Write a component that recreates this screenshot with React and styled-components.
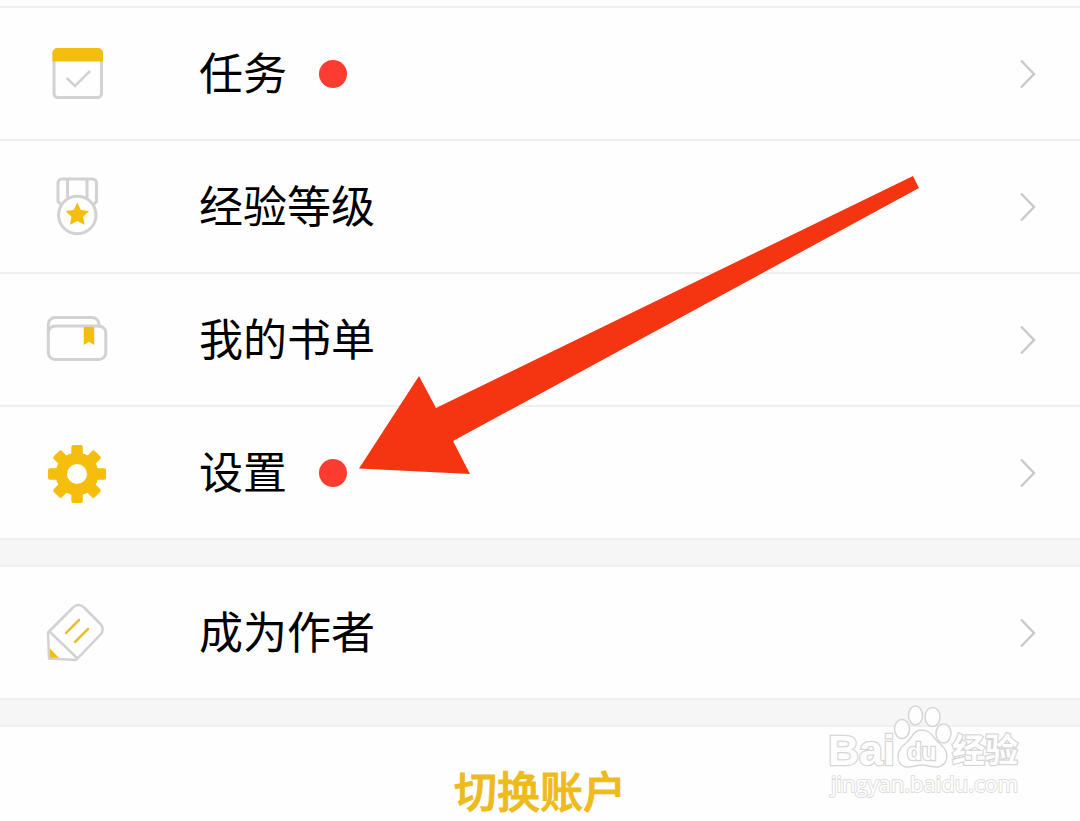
import React from 'react';
import styled, { createGlobalStyle } from 'styled-components';

const GlobalStyle = createGlobalStyle`
  * {
    box-sizing: border-box;
  }
  body {
    margin: 0;
    background: #fefefe;
    font-family: "Noto Sans CJK SC", "Liberation Sans", sans-serif;
  }
`;

const Page = styled.main`
  position: relative;
  min-height: 100vh;
  padding-top: 6px;
  overflow: hidden;
`;

const Group = styled.nav`
  border-top: 2px solid #efefef;
`;

const Row = styled.a`
  display: flex;
  align-items: center;
  height: 133px;
  padding: 0 44px;
  border-bottom: 2px solid #efefef;
  color: #000;
  text-decoration: none;
`;

const Icon = styled.svg`
  flex: none;
  width: 64px;
  height: 64px;
  margin-right: 91px;
  fill: none;
  stroke: #d2d2d2;
  stroke-width: 3;
  stroke-linecap: round;
  stroke-linejoin: round;
  .gold {
    fill: #f5bd0c;
    stroke: none;
  }
  .goldLine {
    stroke: #e9bf35;
  }
`;

const Label = styled.span`
  padding-bottom: 5px;
  font-size: 44px;
  line-height: 64px;
`;

const Dot = styled.i`
  width: 28px;
  height: 28px;
  margin-left: 32px;
  border-radius: 50%;
  background: #fd3c31;
`;

const Chevron = styled.svg`
  flex: none;
  width: 16px;
  height: 30px;
  margin-left: auto;
  fill: none;
  stroke: #cacaca;
  stroke-width: 2.5;
`;

const Gap = styled.div`
  height: 25px;
  background: #f6f6f6;
`;

const Footer = styled.div`
  display: flex;
  justify-content: center;
  padding-top: 32px;
  border-top: 2px solid #efefef;
`;

const SwitchButton = styled.button`
  padding: 0;
  border: 0;
  background: none;
  color: #eebb1c;
  font-family: inherit;
  font-size: 43px;
  font-weight: 500;
  line-height: 60px;
  -webkit-text-stroke: 1px #eebb1c;
  cursor: pointer;
`;

const Arrow = styled.svg`
  position: absolute;
  top: 170px;
  left: 350px;
  width: 580px;
  height: 310px;
  pointer-events: none;
`;

const Watermark = styled.svg`
  position: absolute;
  top: 700px;
  right: 50px;
  width: 210px;
  height: 110px;
  pointer-events: none;
  fill: #fefefe;
  stroke: #d6d6d6;
  stroke-width: 1.5;
  text {
    font-family: "Liberation Sans", "Noto Sans CJK SC", sans-serif;
    font-weight: 700;
    paint-order: stroke;
    stroke-width: 2.5;
  }
  .url {
    font-family: "Open Sans", sans-serif;
    font-weight: 400;
    stroke: #dedede;
    stroke-width: 2;
  }
`;

const TaskIcon = () => (
  <Icon viewBox="0 0 64 64" aria-hidden="true">
    <rect x="10" y="7.500" width="47.500" height="48" rx="4" />
    <path className="gold" d="M8.500 19.500V11a5 5 0 0 1 5-5H54a5 5 0 0 1 5 5v8.500z" />
    <path d="M22.700 36l8.300 8L46 29" strokeWidth="2.500" strokeLinecap="butt" strokeLinejoin="miter" />
  </Icon>
);

const MedalIcon = () => (
  <Icon viewBox="0 0 64 64" aria-hidden="true">
    <path d="M16.500 29L14 26.500V8a4 4 0 0 1 4-4h30.500a4 4 0 0 1 4 4v18.500L50 29M23.500 4v18M43 4v18" />
    <circle cx="33.300" cy="40" r="18.700" />
    <path
      className="gold"
      d="M33.300 27.500l3.600 7.400 8.100 1.100-5.900 5.700 1.500 8.100-7.300-3.900-7.300 3.900 1.500-8.100-5.900-5.700 8.100-1.100z"
    />
  </Icon>
);

const BooklistIcon = () => (
  <Icon viewBox="0 0 64 64" aria-hidden="true">
    <path d="M4.300 26V16.500a7 7 0 0 1 7-7H48a7 7 0 0 1 7 7v1.500" />
    <rect x="4.300" y="18" width="57.500" height="33.500" rx="7" />
    <path className="gold" d="M39.700 19h10.500v18l-5.200-3.200-5.300 3.200z" />
  </Icon>
);

const GearIcon = () => (
  <Icon viewBox="0 0 64 64" aria-hidden="true">
    {[0, 45, 90, 135].map((angle) => (
      <rect
        key={angle}
        className="gold"
        x="27.300"
        y="4"
        width="11.500"
        height="58"
        rx="2"
        transform={`rotate(${angle} 33 33)`}
      />
    ))}
    <circle className="gold" cx="33" cy="33" r="21.500" />
    <circle cx="33" cy="33" r="10" fill="#fefefe" stroke="none" />
  </Icon>
);

const PencilIcon = () => (
  <Icon viewBox="0 0 64 64" aria-hidden="true">
    <path className="gold" d="M5 46.500l10 10.500-10 .5z" />
    <g strokeWidth="2.500">
      <path d="M4 31.500L29 6.500a7.500 7.500 0 0 1 11 0L56.500 23a7.500 7.500 0 0 1 0 10.500L32 59 5 57.500z" />
      <path d="M6 31l27.500 26.500" />
      <path className="goldLine" d="M22 32l13-13M31 41l13-13" />
    </g>
  </Icon>
);

const MenuRow = ({ icon, label, dot }) => (
  <Row href="#">
    {icon}
    <Label>{label}</Label>
    {dot && <Dot />}
    <Chevron viewBox="0 0 16 30" aria-hidden="true">
      <path d="M1 1.500L14 15 1 28.500" />
    </Chevron>
  </Row>
);

export default function App() {
  return (
    <>
      <GlobalStyle />
      <Page>
        <Group>
          <MenuRow icon={<TaskIcon />} label="任务" dot />
          <MenuRow icon={<MedalIcon />} label="经验等级" />
          <MenuRow icon={<BooklistIcon />} label="我的书单" />
          <MenuRow icon={<GearIcon />} label="设置" dot />
        </Group>
        <Gap />
        <Group>
          <MenuRow icon={<PencilIcon />} label="成为作者" />
        </Group>
        <Gap />
        <Footer>
          <SwitchButton type="button">切换账户</SwitchButton>
        </Footer>

        <Arrow viewBox="350 170 580 310" aria-hidden="true">
          <path fill="#f53411" d="M359 468.500L419 376l17 32L913 176l6 12L453 441l17 33z" />
        </Arrow>

        <Watermark viewBox="820 700 210 110">
          <text x="828" y="765" fontSize="43">Bai</text>
          <ellipse cx="902" cy="729" rx="7.500" ry="9.500" />
          <ellipse cx="915.500" cy="715.500" rx="7" ry="9.500" />
          <ellipse cx="932.500" cy="717" rx="7.500" ry="9.500" />
          <ellipse cx="943.500" cy="733.500" rx="7.500" ry="9.500" />
          <path d="M922 730c7 0 10 5 14 10 5 5 11 9 11 16 0 7-5 11-11 11-5 0-9-2-14-2s-9 2-14 2c-6 0-10-4-10-11 0-7 6-11 11-16 4-5 6-10 13-10z" />
          <text x="907" y="760" fontSize="24">du</text>
          <text x="952" y="762" fontSize="33">经验</text>
          <text className="url" x="831" y="792" fontSize="22">jingyan.baidu.com</text>
        </Watermark>
      </Page>
    </>
  );
}
